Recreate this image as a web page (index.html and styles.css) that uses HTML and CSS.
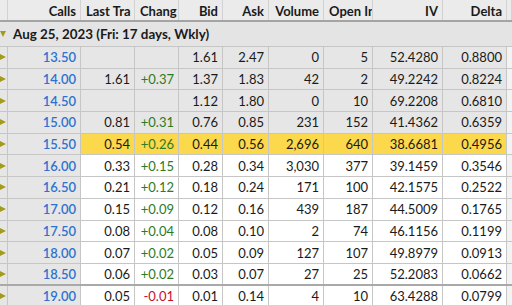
FILE: index.html
```html
<!DOCTYPE html>
<html>
<head>
<meta charset="utf-8">
<link rel="stylesheet" href="styles.css">
</head>
<body>
<div class="grid">
  <div class="row head">
    <div class="c arrow"></div>
    <div class="c">Calls</div>
    <div class="c clip">Last Tra</div>
    <div class="c clip">Chang</div>
    <div class="c">Bid</div>
    <div class="c">Ask</div>
    <div class="c">Volume</div>
    <div class="c clip">Open In</div>
    <div class="c">IV</div>
    <div class="c">Delta</div>
    <div class="c tail"></div>
  </div>
  <div class="group"><span class="down"></span><span class="gtitle">Aug 25, 2023 (Fri: 17 days, Wkly)</span></div>

  <div class="row itm"><div class="c arrow"><span class="tri"></span></div><div class="c strike">13.50</div><div class="c"></div><div class="c"></div><div class="c">1.61</div><div class="c">2.47</div><div class="c">0</div><div class="c">5</div><div class="c">52.4280</div><div class="c">0.8800</div><div class="c tail"></div></div>
  <div class="row itm"><div class="c arrow"><span class="tri"></span></div><div class="c strike">14.00</div><div class="c">1.61</div><div class="c up">+0.37</div><div class="c">1.37</div><div class="c">1.83</div><div class="c">42</div><div class="c">2</div><div class="c">49.2242</div><div class="c">0.8224</div><div class="c tail"></div></div>
  <div class="row itm"><div class="c arrow"><span class="tri"></span></div><div class="c strike">14.50</div><div class="c"></div><div class="c"></div><div class="c">1.12</div><div class="c">1.80</div><div class="c">0</div><div class="c">10</div><div class="c">69.2208</div><div class="c">0.6810</div><div class="c tail"></div></div>
  <div class="row itm"><div class="c arrow"><span class="tri"></span></div><div class="c strike">15.00</div><div class="c">0.81</div><div class="c up">+0.31</div><div class="c">0.76</div><div class="c">0.85</div><div class="c">231</div><div class="c">152</div><div class="c">41.4362</div><div class="c">0.6359</div><div class="c tail"></div></div>
  <div class="row hl"><div class="c arrow"><span class="tri"></span></div><div class="c strike">15.50</div><div class="c">0.54</div><div class="c up">+0.26</div><div class="c">0.44</div><div class="c">0.56</div><div class="c">2,696</div><div class="c">640</div><div class="c">38.6681</div><div class="c">0.4956</div><div class="c tail"></div></div>
  <div class="row"><div class="c arrow"><span class="tri"></span></div><div class="c strike">16.00</div><div class="c">0.33</div><div class="c up">+0.15</div><div class="c">0.28</div><div class="c">0.34</div><div class="c">3,030</div><div class="c">377</div><div class="c">39.1459</div><div class="c">0.3546</div><div class="c tail"></div></div>
  <div class="row"><div class="c arrow"><span class="tri"></span></div><div class="c strike">16.50</div><div class="c">0.21</div><div class="c up">+0.12</div><div class="c">0.18</div><div class="c">0.24</div><div class="c">171</div><div class="c">100</div><div class="c">42.1575</div><div class="c">0.2522</div><div class="c tail"></div></div>
  <div class="row"><div class="c arrow"><span class="tri"></span></div><div class="c strike">17.00</div><div class="c">0.15</div><div class="c up">+0.09</div><div class="c">0.12</div><div class="c">0.16</div><div class="c">439</div><div class="c">187</div><div class="c">44.5009</div><div class="c">0.1765</div><div class="c tail"></div></div>
  <div class="row"><div class="c arrow"><span class="tri"></span></div><div class="c strike">17.50</div><div class="c">0.08</div><div class="c up">+0.04</div><div class="c">0.08</div><div class="c">0.10</div><div class="c">2</div><div class="c">74</div><div class="c">46.1156</div><div class="c">0.1199</div><div class="c tail"></div></div>
  <div class="row"><div class="c arrow"><span class="tri"></span></div><div class="c strike">18.00</div><div class="c">0.07</div><div class="c up">+0.02</div><div class="c">0.05</div><div class="c">0.09</div><div class="c">127</div><div class="c">107</div><div class="c">49.8979</div><div class="c">0.0913</div><div class="c tail"></div></div>
  <div class="row split"><div class="c arrow"><span class="tri"></span></div><div class="c strike">18.50</div><div class="c">0.06</div><div class="c up">+0.02</div><div class="c">0.03</div><div class="c">0.07</div><div class="c">27</div><div class="c">25</div><div class="c">52.2083</div><div class="c">0.0662</div><div class="c tail"></div></div>
  <div class="row"><div class="c arrow"><span class="tri"></span></div><div class="c strike">19.00</div><div class="c">0.05</div><div class="c down-chg">-0.01</div><div class="c">0.01</div><div class="c">0.14</div><div class="c">4</div><div class="c">10</div><div class="c">63.4288</div><div class="c">0.0799</div><div class="c tail"></div></div>
</div>
</body>
</html>
```

FILE: styles.css
```css
html, body {
  margin: 0;
  padding: 0;
  background: #ffffff;
}
body {
  font-family: Lato, "Open Sans", sans-serif;
  font-size: 13px;
  color: #1a1a1a;
  overflow: hidden;
}
.grid {
  width: 512px;
  display: flex;
  flex-direction: column;
}
.row {
  display: grid;
  grid-template-columns: 8px 73px 54px 44px 44px 46px 55px 49px 70px 64px 1fr;
  height: 21.7px;
  box-sizing: border-box;
  border-bottom: 1px solid #c6c6c6;
  background: #ffffff;
}
.c {
  box-sizing: border-box;
  border-right: 1px solid #c6c6c6;
  text-align: right;
  padding-right: 4px;
  white-space: nowrap;
  overflow: hidden;
  display: flex;
  align-items: center;
  justify-content: flex-end;
}
.row .arrow {
  background: #e6e6e6;
  padding: 0;
  justify-content: flex-start;
}
.row .strike {
  background: #e6e6e6;
  color: #2e72d0;
  font-weight: 600;
}
.itm .c { background: #e6e6e6; }
.hl .c { background: #fbd84c; }
.hl .arrow, .hl .strike { background: #e6e6e6; }
.row .tail { background: #f3f3f3; border-right: none; }
.up { color: #2d7a24; }
.down-chg { color: #c8102e; }
.split { border-bottom: 2px solid #a9a9a9; }
.tri {
  width: 0;
  height: 0;
  border-top: 3.5px solid transparent;
  border-bottom: 3.5px solid transparent;
  border-left: 6px solid #a39b1c;
}
.head {
  height: 22px;
  background: #ebebeb;
  border-bottom: 2px solid #a4a4a4;
  font-weight: bold;
}
.head .c {
  border-right: 1px solid #d2d2d2;
  background: #ebebeb;
  padding-top: 1px;
}
.head .clip {
  justify-content: flex-start;
  padding-left: 5px;
  padding-right: 0;
}
.head .tail { background: #ebebeb; }
.group {
  height: 25px;
  box-sizing: border-box;
  background: #e4e4e4;
  border-bottom: 1px solid #c6c6c6;
  display: flex;
  align-items: center;
  font-weight: bold;
  font-size: 13.4px;
}
.down {
  width: 0;
  height: 0;
  border-left: 3.5px solid transparent;
  border-right: 3.5px solid transparent;
  border-top: 6px solid #a39b1c;
}
.gtitle {
  margin-left: 7px;
}
```
